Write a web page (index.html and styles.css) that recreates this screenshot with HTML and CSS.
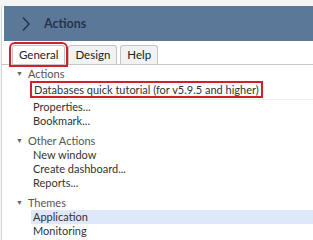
FILE: index.html
```html
<!DOCTYPE html>
<html>
  <head>
    <meta charset="utf-8" />
    <title>Actions</title>
    <link rel="stylesheet" href="styles.css">
  </head>
  <body>
    <div class="panel">
      <div class="header">
        <svg class="chev" width="10" height="16" viewBox="0 0 10 16">
          <path d="M2 1.5 L8 8 L2 14.5" fill="none" stroke="#26344c" stroke-width="1.5" />
        </svg>
        <span class="title">Actions</span>
      </div>
      <div class="tabs">
        <div class="tab active marked">General</div>
        <div class="tab">Design</div>
        <div class="tab">Help</div>
      </div>
      <div class="tree">
        <div class="group">
          <div class="node"><span class="arrow">&#9660;</span>Actions</div>
          <div class="leaf tutorial"><span class="marked">Databases quick tutorial (for v5.9.5 and higher)</span></div>
          <div class="leaf">Properties...</div>
          <div class="leaf">Bookmark...</div>
        </div>
        <div class="group">
          <div class="node"><span class="arrow">&#9660;</span>Other Actions</div>
          <div class="leaf">New window</div>
          <div class="leaf">Create dashboard...</div>
          <div class="leaf">Reports...</div>
        </div>
        <div class="group">
          <div class="node"><span class="arrow">&#9660;</span>Themes</div>
          <div class="leaf selected">Application</div>
          <div class="leaf">Monitoring</div>
        </div>
      </div>
    </div>
  </body>
</html>
```

FILE: styles.css
```css
body {
  margin: 0;
  background: #f4f3f6;
  font-family: Lato, "Noto Sans", sans-serif;
  font-size: 11px;
  color: #333;
}

.panel {
  margin-top: 6px;
  margin-left: 1px;
  background: #fff;
  border-left: 1px solid #d6d6d6;
  height: 234px;
}

.header {
  margin-left: 2px;
  height: 35px;
  background: #5b7899;
  display: flex;
  align-items: center;
  padding-left: 17px;
}

.chev {
  margin-right: 13px;
}

.title {
  font-size: 12.5px;
  font-weight: bold;
  color: #26344c;
}

.tabs {
  display: flex;
  gap: 3px;
  padding: 4px 0 0 10px;
  border-bottom: 1px solid #c8c8c8;
  height: 19px;
}

.tab {
  border: 1px solid #c4c4c4;
  border-bottom: none;
  border-radius: 3px 3px 0 0;
  background: #f2f2f2;
  padding: 0 6px;
  line-height: 18px;
  font-size: 11.5px;
  color: #222;
}

.tab.active {
  background: #fff;
}

.marked {
  outline: 2px solid #d0202a;
}

.tab.marked {
  outline-offset: 1px;
}

.tree {
  padding-top: 1px;
}

.group {
  margin-bottom: 5px;
}

.node {
  line-height: 14px;
  padding-left: 14px;
  color: #555;
}

.arrow {
  font-size: 7px;
  color: #666;
  vertical-align: 2px;
  margin-right: 5px;
}

.leaf {
  line-height: 14px;
  margin-left: 29px;
  padding-left: 2px;
  color: #333;
}

.tutorial {
  padding: 2px 0 2px 1px;
  border-bottom: 1px solid #eef0f2;
}

.tutorial .marked {
  padding: 0 2px;
}

.selected {
  background: #dde8fa;
}
```
